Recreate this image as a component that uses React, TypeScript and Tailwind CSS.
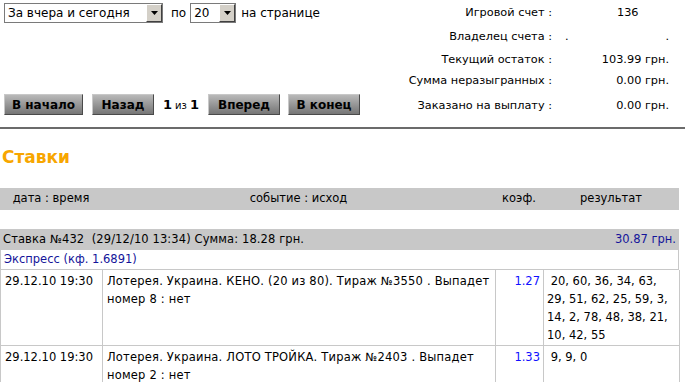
import React from "react";

function Arrow() {
  return (
    <div className="flex w-[16px] items-center justify-center border border-t-white border-l-white border-b-[#404040] border-r-[#404040] bg-[#d4d0c8]">
      <svg width="7" height="4" viewBox="0 0 7 4">
        <polygon points="0,0 7,0 3.5,4" fill="#000" />
      </svg>
    </div>
  );
}

function Btn({ children, w }: { children: React.ReactNode; w: string }) {
  return (
    <div
      className={`${w} flex h-[21px] items-center justify-center border border-t-[#c8c8c8] border-l-[#c8c8c8] border-b-[#4a4a4a] border-r-[#4a4a4a] bg-gradient-to-b from-[#b9b9b9] to-[#767676] text-[12px] font-bold text-black`}
    >
      {children}
    </div>
  );
}

function InfoRow({ label, h, children }: { label: string; h: string; children: React.ReactNode }) {
  return (
    <div className={`flex ${h} items-center`}>
      <div className="w-[152px] text-right">{label}</div>
      <div className="ml-[13px] w-[104px]">{children}</div>
    </div>
  );
}

export default function App() {
  return (
    <div className="h-[382px] w-[685px] overflow-hidden bg-white font-['DejaVu_Sans',Verdana,sans-serif] text-[11.5px] text-black">
      <div className="flex h-[127px]">
        <div className="flex w-[400px] flex-col justify-between pb-[12px] pl-[4px] pt-[3px]">
          <div className="flex items-center">
            <div className="flex h-[20px] w-[159px] border border-[#7a7a7a] bg-white">
              <div className="flex flex-1 items-center pl-[3px] text-[12px]">За вчера и сегодня</div>
              <Arrow />
            </div>
            <div className="ml-[8px] mr-[4px] text-[12px]">по</div>
            <div className="flex h-[20px] w-[46px] border border-[#7a7a7a] bg-white">
              <div className="flex flex-1 items-center pl-[3px] text-[12px]">20</div>
              <Arrow />
            </div>
            <div className="ml-[5px] text-[12px]">на странице</div>
          </div>
          <div className="flex items-center">
            <Btn w="w-[79px]">В начало</Btn>
            <div className="ml-[9px]" />
            <Btn w="w-[62px]">Назад</Btn>
            <div className="ml-[9px] flex w-[36px] items-baseline">
              <span className="text-[13px] font-bold">1</span>
              <span className="mx-[3px] text-[10px]">из</span>
              <span className="text-[13px] font-bold">1</span>
            </div>
            <div className="ml-[9px]" />
            <Btn w="w-[72px]">Вперед</Btn>
            <div className="ml-[8px]" />
            <Btn w="w-[72px]">В конец</Btn>
          </div>
        </div>
        <div className="flex flex-1 flex-col pt-[1px] text-[11.3px]">
          <InfoRow label="Игровой счет :" h="h-[24px]">
            <div className="pl-[52px]">136</div>
          </InfoRow>
          <InfoRow label="Владелец счета :" h="h-[24px]">
            <div className="flex justify-between">
              <span>.</span>
              <span>.</span>
            </div>
          </InfoRow>
          <InfoRow label="Текущий остаток :" h="h-[22px]">
            <div className="text-right">103.99 грн.</div>
          </InfoRow>
          <InfoRow label="Сумма неразыгранных :" h="h-[21px]">
            <div className="text-right">0.00 грн.</div>
          </InfoRow>
          <InfoRow label="Заказано на выплату :" h="h-[28px]">
            <div className="text-right">0.00 грн.</div>
          </InfoRow>
        </div>
      </div>
      <div className="h-[2px] bg-[#6b6b6b]" />

      <div className="w-[679px]">
        <div className="ml-[2px] mt-[19px] flex h-[20px] items-center text-[17px] font-bold text-[#f7a600]">
          Ставки
        </div>

        <div className="mt-[20px] grid h-[22px] grid-cols-[102px_393px_48px_136px] items-center bg-[#c8c8c8]">
          <div className="text-center">дата : время</div>
          <div className="text-center">событие : исход</div>
          <div className="text-center">коэф.</div>
          <div className="text-center">результат</div>
        </div>

        <div className="mt-[19px] flex h-[21px] items-center justify-between bg-[#c8c8c8] px-[3px]">
          <span className="tracking-[0.1px]">Ставка №432&nbsp; (29/12/10 13:34) Сумма: 18.28 грн.</span>
          <span className="text-[#14149a]">30.87 грн.</span>
        </div>

        <div className="flex h-[19px] items-center border-x border-[#c8c8c8] px-[3px] text-[#14149a]">
          Экспресс (кф. 1.6891)
        </div>

        <div className="grid grid-cols-[102px_393px_48px_136px] border-l border-t border-[#c8c8c8] leading-[18px]">
          <div className="h-[76px] whitespace-nowrap border-r border-b border-[#c8c8c8] pl-[4px] pt-[2px]">29.12.10 19:30</div>
          <div className="overflow-hidden whitespace-nowrap border-r border-b border-[#c8c8c8] pl-[4px] pt-[2px] tracking-[0.2px]">
            Лотерея. Украина. КЕНО. (20 из 80). Тираж №3550 . Выпадет
            <br />
            номер 8 : нет
          </div>
          <div className="border-r border-b border-[#c8c8c8] pr-[3px] pt-[2px] text-right text-[#1010ff]">1.27</div>
          <div className="whitespace-nowrap border-r border-b border-[#c8c8c8] pl-[3px] pt-[2px]">
            &nbsp;20, 60, 36, 34, 63,
            <br />
            29, 51, 62, 25, 59, 3,
            <br />
            14, 2, 78, 48, 38, 21,
            <br />
            10, 42, 55
          </div>

          <div className="h-[60px] whitespace-nowrap border-r border-b border-[#c8c8c8] pl-[4px] pt-[2px]">29.12.10 19:30</div>
          <div className="overflow-hidden whitespace-nowrap border-r border-b border-[#c8c8c8] pl-[4px] pt-[2px] tracking-[0.2px]">
            Лотерея. Украина. ЛОТО ТРОЙКА. Тираж №2403 . Выпадет
            <br />
            номер 2 : нет
          </div>
          <div className="border-r border-b border-[#c8c8c8] pr-[3px] pt-[2px] text-right text-[#1010ff]">1.33</div>
          <div className="whitespace-nowrap border-r border-b border-[#c8c8c8] pl-[3px] pt-[2px]">&nbsp;9, 9, 0</div>
        </div>
      </div>
    </div>
  );
}
